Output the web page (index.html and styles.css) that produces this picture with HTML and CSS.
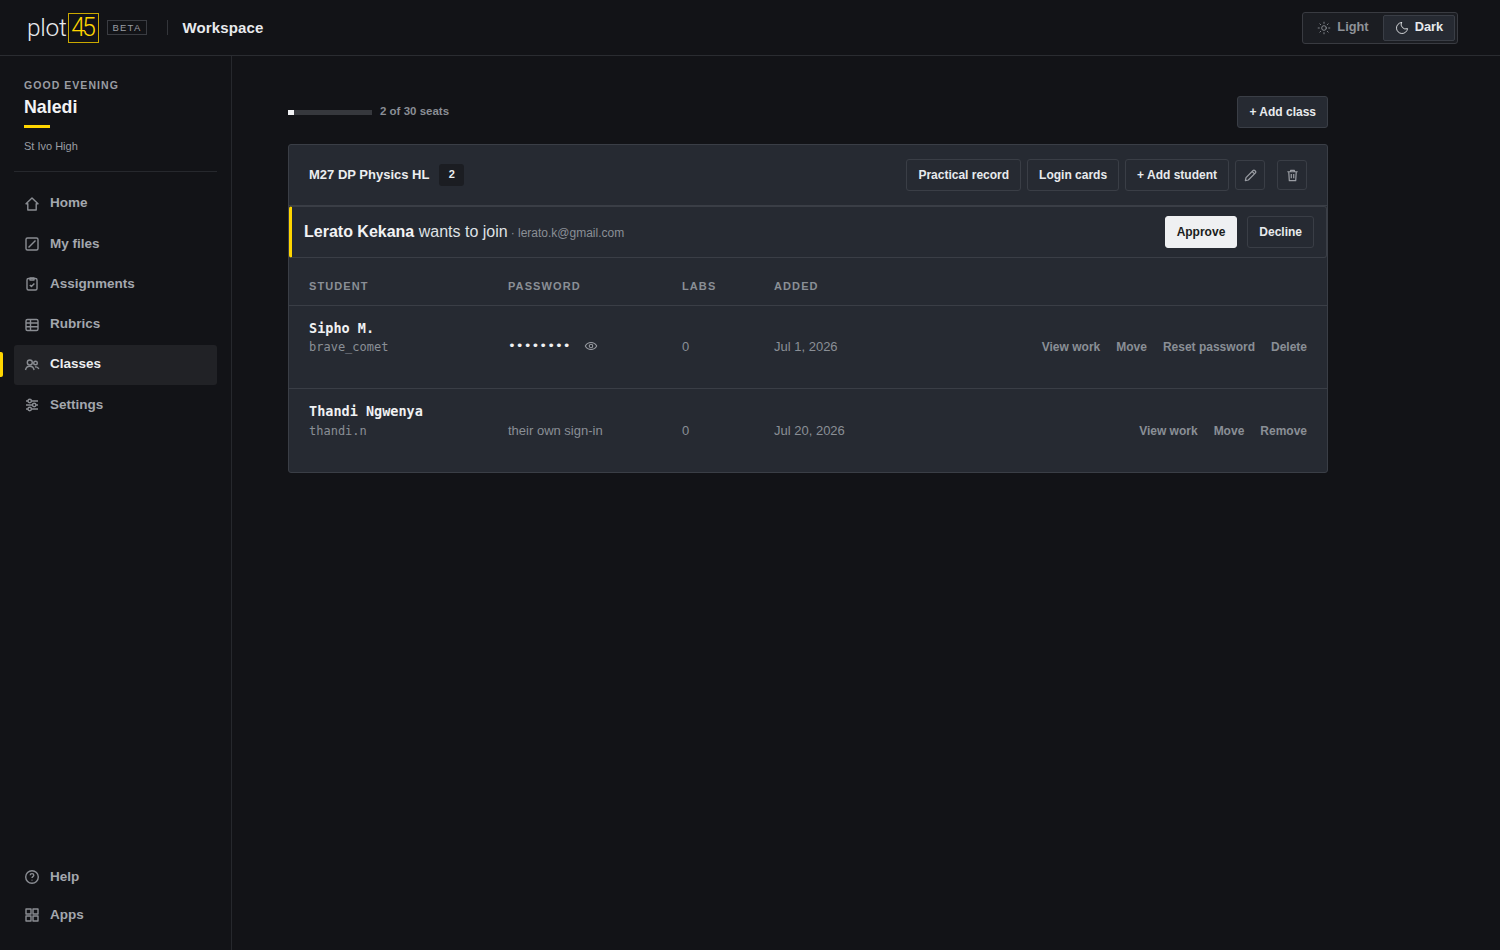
FILE: index.html
```html
<!DOCTYPE html>
<html lang="en">
<head>
    <meta charset="utf-8">
    <title>plot45 Workspace</title>
    <link rel="stylesheet" href="styles.css">
</head>
<body>
    <header class="topBar">
        <div class="logo">
            <span class="logoWord">plot</span><span class="logoBox">45</span>
        </div>
        <span class="betaTag">BETA</span>
        <span class="topTitle">Workspace</span>
        <div class="themeSwitch">
            <button class="themeBtn">
                <svg class="themeIcon" viewBox="0 0 24 24"><circle cx="12" cy="12" r="4"/><path d="M12 2v2M12 20v2M4.900 4.900l1.400 1.400M17.700 17.700l1.400 1.400M2 12h2M20 12h2M4.900 19.100l1.400-1.400M17.700 6.300l1.400-1.400"/></svg>
                Light
            </button>
            <button class="themeBtn themeOn">
                <svg class="themeIcon" viewBox="0 0 24 24"><path d="M11 2.500a8 8 0 0 0 10.500 10.500A9.500 9.500 0 1 1 11 2.500z"/></svg>
                Dark
            </button>
        </div>
    </header>

    <div class="layout">
        <aside class="sideBar">
            <div class="greeting">
                <div class="greetSmall">GOOD EVENING</div>
                <div class="greetName">Naledi</div>
                <div class="greetLine"></div>
                <div class="greetSchool">St Ivo High</div>
            </div>
            <nav class="sideNav">
                <a class="navItem">
                    <svg class="navIcon" viewBox="0 0 16 16"><path d="M8 2l6 5.800h-1.800V14H3.800V7.800H2z"/></svg>
                    Home
                </a>
                <a class="navItem">
                    <svg class="navIcon" viewBox="0 0 16 16"><rect x="2" y="2" width="12" height="12" rx="1.500"/><path d="M4.500 11.500l7-7"/></svg>
                    My files
                </a>
                <a class="navItem">
                    <svg class="navIcon" viewBox="0 0 16 16"><rect x="3" y="2.500" width="10" height="11.500" rx="1.500"/><path d="M6 2h4v2H6zM5.800 9l1.600 1.600 3-3.200"/></svg>
                    Assignments
                </a>
                <a class="navItem">
                    <svg class="navIcon" viewBox="0 0 16 16"><rect x="2" y="2.500" width="12" height="11" rx="1.500"/><path d="M2 6h12M2 9.700h12M6.500 2.500v11"/></svg>
                    Rubrics
                </a>
                <a class="navItem navActive">
                    <svg class="navIcon" viewBox="0 0 16 16"><circle cx="5.800" cy="5.500" r="2.500"/><circle cx="11.500" cy="6" r="1.800"/><path d="M1.500 13c.5-2.500 2.200-3.800 4.300-3.800s3.800 1.300 4.300 3.800M11 10c1.800-.4 3.200.4 3.800 2"/></svg>
                    Classes
                </a>
                <a class="navItem">
                    <svg class="navIcon" viewBox="0 0 16 16"><path d="M2 4h2M7.500 4H14M2 8h6.500M12 8h2M2 12h2M7.500 12H14"/><circle cx="5.700" cy="4" r="1.700"/><circle cx="10.200" cy="8" r="1.700"/><circle cx="5.700" cy="12" r="1.700"/></svg>
                    Settings
                </a>
            </nav>
            <nav class="sideBottom">
                <a class="navItem">
                    <svg class="navIcon" viewBox="0 0 16 16"><circle cx="8" cy="8" r="6.300"/><path d="M6.200 6.300c0-1 .8-1.700 1.800-1.700s1.800.7 1.800 1.600c0 1.400-1.800 1.400-1.800 2.700M8 10.800v.8"/></svg>
                    Help
                </a>
                <a class="navItem">
                    <svg class="navIcon" viewBox="0 0 16 16"><rect x="2" y="2" width="5" height="5"/><rect x="9" y="2" width="5" height="5"/><rect x="2" y="9" width="5" height="5"/><rect x="9" y="9" width="5" height="5"/></svg>
                    Apps
                </a>
            </nav>
        </aside>

        <main class="content">
            <div class="seatRow">
                <div class="seatBar"><div class="seatFill" style="width: 7%"></div></div>
                <span class="seatText">2 of 30 seats</span>
                <button class="btn btnRaised addClass">+ Add class</button>
            </div>

            <section class="classCard">
                <div class="classHead">
                    <span class="className">M27 DP Physics HL</span>
                    <span class="classCount">2</span>
                    <div class="classActions">
                        <button class="btn">Practical record</button>
                        <button class="btn">Login cards</button>
                        <button class="btn">+ Add student</button>
                        <button class="iconBtn">
                            <svg viewBox="0 0 16 16"><path d="M2.500 13.500l.7-3.200 7.600-7.600a1.200 1.200 0 0 1 1.700 0l.8.8a1.200 1.200 0 0 1 0 1.700l-7.600 7.600zM9.800 3.700l2.500 2.500"/></svg>
                        </button>
                        <button class="iconBtn trashBtn">
                            <svg viewBox="0 0 16 16"><path d="M2.500 4h11M6 4V2.500h4V4M4 4l.6 9.500h6.800L12 4M6.700 6.500v4.500M9.300 6.500v4.500"/></svg>
                        </button>
                    </div>
                </div>

                <div class="joinBox">
                    <span class="joinText"><b>Lerato Kekana</b> wants to join</span>
                    <span class="joinMail">· lerato.k@gmail.com</span>
                    <button class="btn btnLight">Approve</button>
                    <button class="btn">Decline</button>
                </div>

                <div class="studentRow tableHead">
                    <span>STUDENT</span>
                    <span>PASSWORD</span>
                    <span>LABS</span>
                    <span>ADDED</span>
                </div>

                <div class="studentRow rowFirst">
                    <div>
                        <div class="studentName">Sipho M.</div>
                        <div class="studentUser">brave_comet</div>
                    </div>
                    <div class="cell passCell">
                        <span class="passDots">••••••••</span>
                        <svg class="eyeIcon" viewBox="0 0 16 16"><path d="M1.500 8C3 5.300 5.300 4 8 4s5 1.300 6.500 4C13 10.700 10.700 12 8 12S3 10.700 1.500 8z"/><circle cx="8" cy="8" r="2"/></svg>
                    </div>
                    <div class="cell">0</div>
                    <div class="cell">Jul 1, 2026</div>
                    <div class="cell rowLinks">
                        <a>View work</a><a>Move</a><a>Reset password</a><a>Delete</a>
                    </div>
                </div>

                <div class="studentRow">
                    <div>
                        <div class="studentName">Thandi Ngwenya</div>
                        <div class="studentUser">thandi.n</div>
                    </div>
                    <div class="cell">their own sign-in</div>
                    <div class="cell">0</div>
                    <div class="cell">Jul 20, 2026</div>
                    <div class="cell rowLinks">
                        <a>View work</a><a>Move</a><a>Remove</a>
                    </div>
                </div>
            </section>
        </main>
    </div>
</body>
</html>
```

FILE: styles.css
```css
* {
    box-sizing: border-box;
}
body {
    margin: 0;
    height: 950px;
    overflow: hidden;
    background-color: #121317;
    color: #e8eaed;
    font-family: "Liberation Sans", Arial, sans-serif;
    font-size: 13px;
}
button {
    font-family: inherit;
    cursor: pointer;
}

/* top bar */
.topBar {
    display: flex;
    align-items: center;
    height: 56px;
    padding: 0 42px 0 27px;
    border-bottom: 1px solid #2a2c31;
}
.logo {
    display: flex;
    align-items: center;
}
.logoWord {
    font-family: Roboto, sans-serif;
    font-weight: 300;
    font-size: 24.500px;
    letter-spacing: -0.300px;
    color: #e8eaed;
    margin-right: 1px;
}
.logoBox {
    width: 31px;
    height: 30px;
    border: 1px solid #c9a800;
    color: #ffd600;
    font-family: Roboto, sans-serif;
    font-weight: 300;
    font-size: 25px;
    letter-spacing: -3px;
    line-height: 27px;
    text-align: center;
    padding-right: 2px;
}
.betaTag {
    margin-left: 8px;
    padding: 0 5px;
    height: 15px;
    line-height: 14px;
    border: 1px solid #3a3c42;
    color: #9a9da3;
    font-size: 9.500px;
    letter-spacing: 1.200px;
}
.topTitle {
    margin-left: 20px;
    padding-left: 14px;
    border-left: 1px solid #33353a;
    font-size: 15px;
    font-weight: bold;
    letter-spacing: 0.150px;
    line-height: 15px;
    color: #e8eaed;
}
.themeSwitch {
    margin-left: auto;
    display: flex;
    align-items: center;
    width: 156px;
    height: 32px;
    padding: 2px;
    background-color: #1b1d22;
    border: 1px solid #393b41;
    border-radius: 3px;
}
.themeBtn {
    display: flex;
    align-items: center;
    justify-content: center;
    gap: 6px;
    height: 26px;
    width: 78px;
    padding: 0 2px 2px 0;
    background: none;
    border: 1px solid transparent;
    border-radius: 2px;
    color: #8f9298;
    font-size: 12.800px;
    font-weight: bold;
}
.themeOn {
    width: 72px;
    padding-right: 0;
    background-color: #262a32;
    border-color: #3a3e46;
    color: #e8eaed;
}
.themeIcon {
    width: 14px;
    height: 14px;
    margin-top: 2px;
    fill: none;
    stroke: currentColor;
    stroke-width: 1.500;
    stroke-linecap: round;
    stroke-linejoin: round;
}

/* side bar */
.layout {
    display: flex;
    height: 894px;
}
.sideBar {
    display: flex;
    flex-direction: column;
    width: 232px;
    flex-shrink: 0;
    padding: 23px 14px 16px;
    border-right: 1px solid #26282d;
}
.greeting {
    padding: 0 10px 18px;
    border-bottom: 1px solid #26282d;
    margin-bottom: 12.300px;
}
.greetSmall {
    font-size: 10.500px;
    font-weight: bold;
    letter-spacing: 1.050px;
    line-height: 12px;
    color: #9a9da3;
}
.greetName {
    margin-top: 6px;
    font-size: 17.800px;
    font-weight: bold;
    line-height: 21px;
    color: #f2f3f5;
}
.greetLine {
    width: 26px;
    height: 3px;
    margin-top: 7px;
    background-color: #ffd600;
}
.greetSchool {
    margin-top: 12px;
    font-size: 11px;
    line-height: 13px;
    color: #9a9da3;
}
.sideNav {
    display: flex;
    flex-direction: column;
    gap: 1px;
}
.sideBottom {
    margin-top: auto;
    display: flex;
    flex-direction: column;
}
.navItem {
    position: relative;
    display: flex;
    align-items: center;
    gap: 10px;
    height: 39.250px;
    padding: 0 10px 2px;
    border-radius: 3px;
    color: #a3a7ae;
    font-size: 13.500px;
    font-weight: bold;
}
.sideBottom .navItem {
    height: 38px;
}
.navActive {
    background-color: #212226;
    color: #eceef0;
}
.navActive::before {
    content: "";
    position: absolute;
    left: -14px;
    top: 7px;
    width: 3px;
    height: 25px;
    background-color: #ffd600;
    border-radius: 0 2px 2px 0;
}
.navIcon {
    width: 16px;
    height: 16px;
    flex-shrink: 0;
    fill: none;
    stroke: #8a8d93;
    stroke-width: 1.400;
    stroke-linejoin: round;
    margin-top: 2px;
}

/* content */
.content {
    flex: 1;
    padding: 40px 0 0 56px;
}
.seatRow {
    display: flex;
    align-items: center;
    width: 1040px;
    height: 32px;
    margin-bottom: 16px;
}
.seatBar {
    width: 84px;
    height: 5px;
    background-color: #36383d;
}
.seatFill {
    height: 100%;
    background-color: #f0f1f3;
}
.seatText {
    margin-left: 8px;
    margin-top: -3px;
    font-size: 11.500px;
    font-weight: bold;
    color: #8a8e95;
}
.btn {
    height: 32px;
    padding: 0 11px;
    background: none;
    border: 1px solid #3a3e46;
    border-radius: 3px;
    color: #e8eaed;
    font-size: 12px;
    font-weight: bold;
}
.btnRaised {
    background-color: #262a32;
}
.addClass {
    margin-left: auto;
}
.btnLight {
    margin-left: auto;
    margin-right: 10px;
    background-color: #eff0f2;
    border-color: #eff0f2;
    color: #1a1c20;
}
.classCard {
    width: 1040px;
    height: 329px;
    background-color: #262a32;
    border: 1px solid #3a3e46;
    border-radius: 3px;
}
.classHead {
    display: flex;
    align-items: center;
    height: 61px;
    padding: 0 20px;
    border-bottom: 1px solid #3a3e46;
}
.className {
    margin-top: -2px;
    font-size: 13px;
    font-weight: bold;
    color: #eceef0;
}
.classCount {
    width: 25px;
    height: 22px;
    margin-left: 10px;
    background-color: #1b1d22;
    border-radius: 3px;
    font-size: 11px;
    font-weight: bold;
    line-height: 20px;
    text-align: center;
    color: #eceef0;
}
.classActions {
    margin-left: auto;
    display: flex;
    align-items: center;
    gap: 6px;
}
.iconBtn {
    width: 30px;
    height: 30px;
    padding: 0;
    background: none;
    border: 1px solid #3a3e46;
    border-radius: 3px;
    display: flex;
    align-items: center;
    justify-content: center;
}
.iconBtn svg {
    width: 15px;
    height: 15px;
    fill: none;
    stroke: #9a9da3;
    stroke-width: 1.300;
    stroke-linejoin: round;
}
.trashBtn {
    margin-left: 6px;
}
.joinBox {
    display: flex;
    align-items: center;
    height: 52px;
    padding: 0 12px;
    border: 1px solid #3a3e46;
    border-left: 3px solid #ffd600;
    border-radius: 3px;
}
.joinText {
    font-size: 16px;
    color: #dfe1e5;
}
.joinText b {
    color: #f2f3f5;
}
.joinMail {
    margin-left: 3px;
    margin-top: 2px;
    font-size: 12px;
    color: #8a8f96;
}
.studentRow {
    display: grid;
    grid-template-columns: 199px 174px 92px 140px 1fr;
    height: 83px;
    padding: 14px 20px 0;
    border-bottom: 1px solid #3a3e46;
}
.studentRow:last-child {
    border-bottom: none;
}
.tableHead {
    height: 48px;
    padding-top: 22px;
    font-size: 11px;
    font-weight: bold;
    letter-spacing: 1.100px;
    color: #8a8f96;
}
.studentName {
    font-family: "DejaVu Sans Mono", monospace;
    font-size: 13.500px;
    font-weight: bold;
    line-height: 17px;
    color: #f0f1f3;
}
.studentUser {
    margin-top: 4px;
    font-family: "DejaVu Sans Mono", monospace;
    font-size: 12px;
    line-height: 15px;
    color: #8a8f96;
}
.rowFirst .studentUser {
    margin-top: 3px;
}
.cell {
    padding-top: 20px;
    font-size: 13px;
    line-height: 15px;
    color: #8a8f96;
}
.rowFirst .cell {
    padding-top: 19px;
}
.passCell {
    display: flex;
    align-items: flex-start;
    gap: 13px;
}
.passDots {
    width: 63px;
    color: #f0f1f3;
    font-family: "DejaVu Sans Mono", monospace;
    font-size: 13px;
    line-height: 13px;
}
.eyeIcon {
    width: 14px;
    height: 14px;
    fill: none;
    stroke: #9a9da3;
    stroke-width: 1.200;
}
.rowLinks {
    display: flex;
    justify-content: flex-end;
    gap: 16px;
    font-size: 12px;
    font-weight: bold;
    color: #8a8f96;
}
.rowLinks a {
    margin-top: 1px;
}
```
